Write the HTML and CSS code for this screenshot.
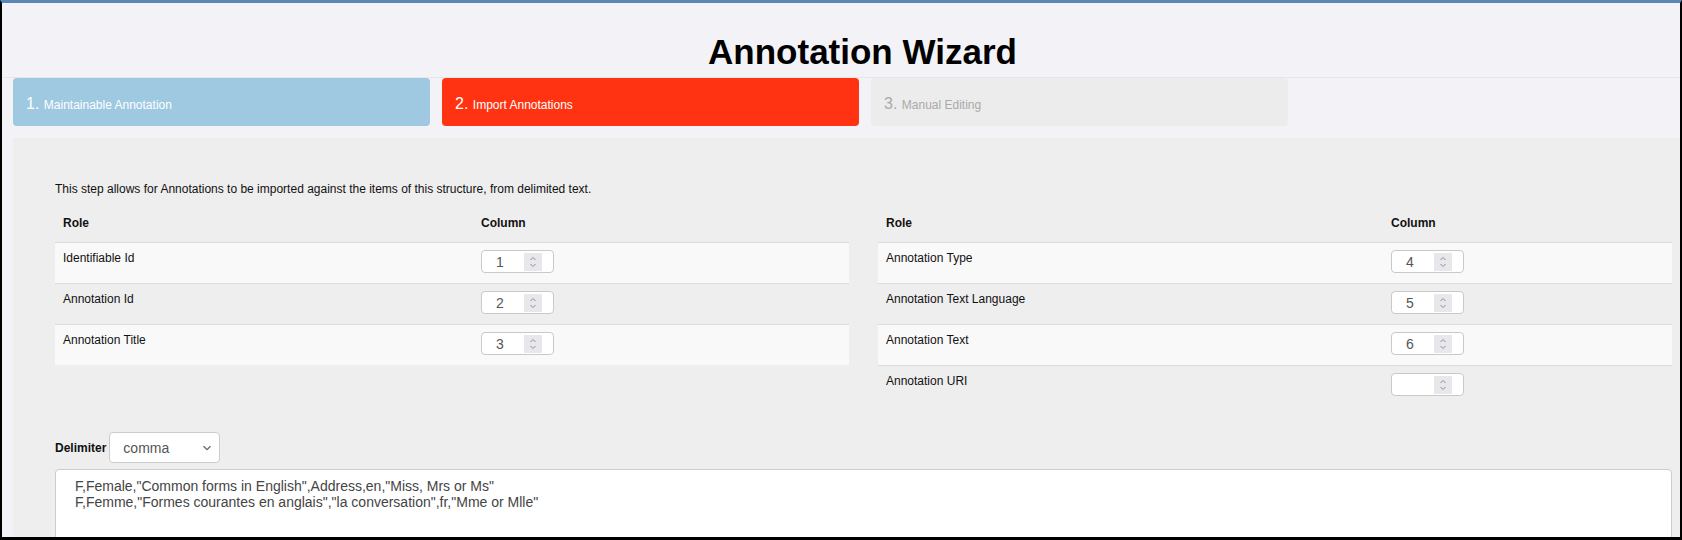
FILE: index.html
```html
<!DOCTYPE html>
<html lang="en">
<head>
<meta charset="utf-8">
<title>Annotation Wizard</title>
<link rel="stylesheet" href="styles.css">
</head>
<body>
<div class="frame">
  <header class="wizard-header">
    <h1 class="wizard-title">Annotation Wizard</h1>
  </header>
  <nav class="steps">
    <div class="step step-done"><span class="step-text"><span class="step-num">1.</span> <span class="step-label">Maintainable Annotation</span></span></div>
    <div class="step step-active"><span class="step-text"><span class="step-num">2.</span> <span class="step-label">Import Annotations</span></span></div>
    <div class="step step-todo"><span class="step-text"><span class="step-num">3.</span> <span class="step-label">Manual Editing</span></span></div>
  </nav>
  <section class="panel">
    <p class="intro">This step allows for Annotations to be imported against the items of this structure, from delimited text.</p>
    <div class="tables">
      <table class="map-table map-left">
        <thead>
          <tr><th class="role-col">Role</th><th>Column</th></tr>
        </thead>
        <tbody>
          <tr class="alt"><td>Identifiable Id</td><td><div class="num"><span class="num-val">1</span><span class="spin"><svg width="18" height="18" viewBox="0 0 18 18"><path d="M6.5 7 L9 4.5 L11.5 7 M6.5 11 L9 13.5 L11.5 11" fill="none" stroke="#8d8d93" stroke-width="1"/></svg></span></div></td></tr>
          <tr><td>Annotation Id</td><td><div class="num"><span class="num-val">2</span><span class="spin"><svg width="18" height="18" viewBox="0 0 18 18"><path d="M6.5 7 L9 4.5 L11.5 7 M6.5 11 L9 13.5 L11.5 11" fill="none" stroke="#8d8d93" stroke-width="1"/></svg></span></div></td></tr>
          <tr class="alt"><td>Annotation Title</td><td><div class="num"><span class="num-val">3</span><span class="spin"><svg width="18" height="18" viewBox="0 0 18 18"><path d="M6.5 7 L9 4.5 L11.5 7 M6.5 11 L9 13.5 L11.5 11" fill="none" stroke="#8d8d93" stroke-width="1"/></svg></span></div></td></tr>
        </tbody>
      </table>
      <table class="map-table map-right">
        <thead>
          <tr><th class="role-col">Role</th><th>Column</th></tr>
        </thead>
        <tbody>
          <tr class="alt"><td>Annotation Type</td><td><div class="num"><span class="num-val">4</span><span class="spin"><svg width="18" height="18" viewBox="0 0 18 18"><path d="M6.5 7 L9 4.5 L11.5 7 M6.5 11 L9 13.5 L11.5 11" fill="none" stroke="#8d8d93" stroke-width="1"/></svg></span></div></td></tr>
          <tr><td>Annotation Text Language</td><td><div class="num"><span class="num-val">5</span><span class="spin"><svg width="18" height="18" viewBox="0 0 18 18"><path d="M6.5 7 L9 4.5 L11.5 7 M6.5 11 L9 13.5 L11.5 11" fill="none" stroke="#8d8d93" stroke-width="1"/></svg></span></div></td></tr>
          <tr class="alt"><td>Annotation Text</td><td><div class="num"><span class="num-val">6</span><span class="spin"><svg width="18" height="18" viewBox="0 0 18 18"><path d="M6.5 7 L9 4.5 L11.5 7 M6.5 11 L9 13.5 L11.5 11" fill="none" stroke="#8d8d93" stroke-width="1"/></svg></span></div></td></tr>
          <tr><td>Annotation URI</td><td><div class="num"><span class="num-val"></span><span class="spin"><svg width="18" height="18" viewBox="0 0 18 18"><path d="M6.5 7 L9 4.5 L11.5 7 M6.5 11 L9 13.5 L11.5 11" fill="none" stroke="#8d8d93" stroke-width="1"/></svg></span></div></td></tr>
        </tbody>
      </table>
    </div>
    <div class="delim-row">
      <label class="delim-label">Delimiter</label>
      <div class="select"><span class="select-val">comma</span><svg class="select-caret" width="10" height="6" viewBox="0 0 10 6"><path d="M1.5 1.2 L5 4.6 L8.5 1.2" fill="none" stroke="#666" stroke-width="1.3"/></svg></div>
    </div>
    <div class="textarea">F,Female,"Common forms in English",Address,en,"Miss, Mrs or Ms"
F,Femme,"Formes courantes en anglais","la conversation",fr,"Mme or Mlle"</div>
  </section>
</div>
</body>
</html>
```
FILE: styles.css
```css
html, body {
  margin: 0;
  padding: 0;
  background: #f3f3f7;
}
body {
  font-family: "Liberation Sans", Arial, sans-serif;
  color: #222;
}
.frame {
  box-sizing: border-box;
  width: 1682px;
  height: 540px;
  overflow: hidden;
  background: #f3f3f7;
  border-left: 2px solid #000;
  border-right: 2px solid #000;
  border-bottom: 3px solid #000;
  border-top: 3px solid #5b87b6;
}
.wizard-header {
  height: 45px;
  padding-top: 29px;
  padding-left: 43px;
  border-bottom: 1px solid #e6e6ea;
}
.wizard-title {
  margin: 0;
  text-align: center;
  font-size: 35px;
  line-height: 40px;
  font-weight: bold;
  color: #000;
}
.steps {
  display: flex;
  gap: 12px;
  margin-left: 11px;
  margin-bottom: 12px;
}
.step {
  box-sizing: border-box;
  width: 417px;
  height: 48px;
  border-radius: 4px;
  display: flex;
  align-items: center;
  padding-left: 13px;
  padding-top: 4px;
  color: #fff;
}
.step-text {
  white-space: pre;
}
.step-num {
  font-size: 16px;
}
.step-label {
  font-size: 12px;
}
.step-done { background: #9ec9e1; }
.step-active { background: #ff3311; }
.step-todo { background: #ececec; color: #aaaaaa; }
.panel {
  margin-left: 11px;
  background: #eeeeee;
  padding: 44px 8px 0 42px;
  height: 400px;
}
.intro {
  margin: 0 0 6px 0;
  font-size: 12px;
  line-height: 14px;
  color: #111;
}
.tables {
  display: flex;
  align-items: flex-start;
  gap: 29px;
}
.map-table {
  width: 794px;
  border-collapse: collapse;
  font-size: 12px;
  line-height: 14px;
  color: #111;
}
.map-left .role-col { width: 402px; }
.map-right .role-col { width: 489px; }
.map-table th {
  text-align: left;
  font-weight: bold;
  padding: 14px 8px 12px 8px;
}
.map-table td {
  border-top: 1px solid #dcdcdc;
  padding: 8px 8px 9px 8px;
  vertical-align: top;
  height: 23px;
}
.map-table tr.alt td {
  background: #f9f9f9;
}
.num {
  box-sizing: border-box;
  width: 73px;
  height: 23px;
  border: 1px solid #c9c9c9;
  border-radius: 4px;
  background: #fff;
  display: flex;
  align-items: center;
  justify-content: space-between;
  padding: 0 11px 0 14px;
  margin-top: -1px;
}
.num-val {
  font-size: 14px;
  color: #555;
}
.spin {
  width: 18px;
  height: 18px;
  background: #e7e7ec;
  display: block;
}
.spin svg { display: block; }
.delim-row {
  display: flex;
  align-items: center;
  gap: 3px;
  margin-top: 26px;
}
.delim-label {
  font-size: 12px;
  font-weight: bold;
  color: #111;
}
.select {
  box-sizing: border-box;
  width: 111px;
  height: 31px;
  border: 1px solid #cccccc;
  border-radius: 4px;
  background: #fff;
  display: flex;
  align-items: center;
  justify-content: space-between;
  padding: 0 7px 0 13px;
}
.select-val {
  font-size: 14px;
  color: #555;
}
.select-caret { display: block; }
.textarea {
  box-sizing: border-box;
  margin-top: 6px;
  width: 1617px;
  height: 90px;
  background: #fff;
  border: 1px solid #cccccc;
  border-radius: 4px;
  padding: 8px 19px;
  font-size: 14px;
  line-height: 16px;
  color: #444;
  white-space: pre;
}
```
